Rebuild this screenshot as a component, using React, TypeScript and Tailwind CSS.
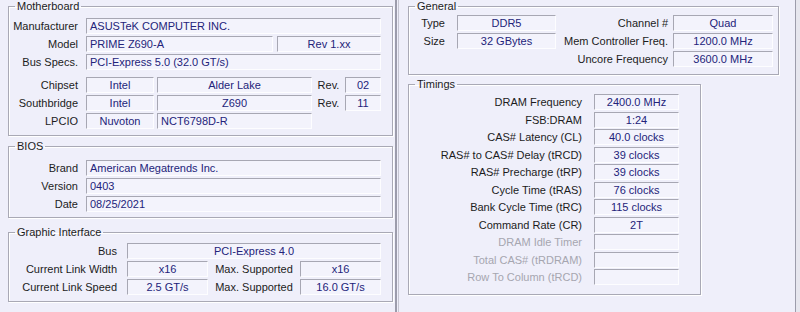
import React from 'react';

type FieldProps = { w?: string; left?: boolean; children?: React.ReactNode };

const Field: React.FC<FieldProps> = ({ w = 'flex-1', left, children }) => (
  <div
    className={`${w} h-[16px] shrink-0 border border-t-[#a7a7b3] border-l-[#a7a7b3] border-b-[#fdfdff] border-r-[#fdfdff] bg-[#f3f3fc] text-[#23237a] leading-[14px] whitespace-nowrap overflow-hidden ${left ? 'pl-[3px] text-left' : 'text-center'}`}
  >
    {children}
  </div>
);

const Label: React.FC<{ w: string; muted?: boolean; center?: boolean; children: React.ReactNode }> = ({ w, muted, center, children }) => (
  <div className={`${w} shrink-0 whitespace-nowrap leading-[16px] ${center ? 'text-center' : 'text-right'} ${muted ? 'text-[#a6a6b0]' : 'text-[#1c1c1c]'}`}>
    {children}
  </div>
);

const Group: React.FC<{ title: string; className: string; children: React.ReactNode }> = ({ title, className, children }) => (
  <fieldset className={`border border-[#a9a9b5] shadow-[inset_1px_1px_0_#ffffff,1px_1px_0_#ffffff] ${className}`}>
    <legend className="ml-[6px] px-[2px] leading-[12px] text-[#1c1c1c]">{title}</legend>
    {children}
  </fieldset>
);

const timings: [string, string, boolean?][] = [
  ['DRAM Frequency', '2400.0 MHz'],
  ['FSB:DRAM', '1:24'],
  ['CAS# Latency (CL)', '40.0 clocks'],
  ['RAS# to CAS# Delay (tRCD)', '39 clocks'],
  ['RAS# Precharge (tRP)', '39 clocks'],
  ['Cycle Time (tRAS)', '76 clocks'],
  ['Bank Cycle Time (tRC)', '115 clocks'],
  ['Command Rate (CR)', '2T'],
  ['DRAM Idle Timer', '', true],
  ['Total CAS# (tRDRAM)', '', true],
  ['Row To Column (tRCD)', '', true],
];

export default function App() {
  return (
    <div
      className="flex h-[312px] w-[800px] overflow-hidden bg-[#efeffa] text-[11px]"
      style={{ fontFamily: '"Liberation Sans", Arial, sans-serif' }}
    >
      {/* Mainboard tab */}
      <div className="flex w-[397px] shrink-0 flex-col border-r-2 border-[#9c9cab] pl-[8px]">
        <Group title="Motherboard" className="w-[385px] pt-[6px] pb-[6px] pr-[11px]">
          <div className="flex flex-col gap-[2px]">
            <div className="flex items-center gap-[8px]">
              <Label w="w-[69px]">Manufacturer</Label>
              <Field left>ASUSTeK COMPUTER INC.</Field>
            </div>
            <div className="flex items-center">
              <Label w="w-[69px]">Model</Label>
              <div className="ml-[8px] flex flex-1 gap-[4px]">
                <Field w="w-[187px]" left>PRIME Z690-A</Field>
                <Field>Rev 1.xx</Field>
              </div>
            </div>
            <div className="flex items-center gap-[8px]">
              <Label w="w-[69px]">Bus Specs.</Label>
              <Field left>PCI-Express 5.0 (32.0 GT/s)</Field>
            </div>
          </div>
          <div className="mt-[7px] flex flex-col gap-[2px]">
            {[
              ['Chipset', 'Intel', 'Alder Lake', '02'],
              ['Southbridge', 'Intel', 'Z690', '11'],
            ].map(([l, a, b, r]) => (
              <div key={l} className="flex items-center">
                <Label w="w-[69px]">{l}</Label>
                <div className="ml-[8px] flex flex-1 items-center">
                  <Field w="w-[68px]">{a}</Field>
                  <div className="ml-[3px]">
                    <Field w="w-[155px]">{b}</Field>
                  </div>
                  <Label w="w-[33px]" center>Rev.</Label>
                  <Field>{r}</Field>
                </div>
              </div>
            ))}
            <div className="flex items-center">
              <Label w="w-[69px]">LPCIO</Label>
              <div className="ml-[8px] flex flex-1 items-center">
                <Field w="w-[68px]">Nuvoton</Field>
                <div className="ml-[3px]">
                  <Field w="w-[155px]" left>NCT6798D-R</Field>
                </div>
              </div>
            </div>
          </div>
        </Group>

        <Group title="BIOS" className="mt-[4px] w-[385px] pt-[8px] pb-[5px] pr-[11px]">
          <div className="flex flex-col gap-[2px]">
            {[
              ['Brand', 'American Megatrends Inc.'],
              ['Version', '0403'],
              ['Date', '08/25/2021'],
            ].map(([l, v]) => (
              <div key={l} className="flex items-center gap-[8px]">
                <Label w="w-[69px]">{l}</Label>
                <Field left>{v}</Field>
              </div>
            ))}
          </div>
        </Group>

        <Group title="Graphic Interface" className="mt-[8px] w-[385px] pt-[5px] pb-[6px] pr-[11px]">
          <div className="flex flex-col gap-[2px]">
            <div className="flex items-center gap-[10px]">
              <Label w="w-[108px]">Bus</Label>
              <Field>PCI-Express 4.0</Field>
            </div>
            {[
              ['Current Link Width', 'x16', 'x16'],
              ['Current Link Speed', '2.5 GT/s', '16.0 GT/s'],
            ].map(([l, a, b]) => (
              <div key={l} className="flex items-center">
                <Label w="w-[108px]">{l}</Label>
                <div className="ml-[10px] flex flex-1 items-center">
                  <Field w="w-[81px]">{a}</Field>
                  <Label w="w-[92px]" center>Max. Supported</Label>
                  <Field>{b}</Field>
                </div>
              </div>
            ))}
          </div>
        </Group>
      </div>

      {/* Memory tab */}
      <div className="ml-[1px] flex w-[398px] shrink-0 flex-col border-x border-l-[#c6c6d2] border-r-[#9c9cab] pl-[9px]">
        <Group title="General" className="w-[371px] pt-[3px] pb-[7px] pr-[5px]">
          <div className="flex">
            <div className="flex flex-col gap-[2px]">
              {[
                ['Type', 'DDR5'],
                ['Size', '32 GBytes'],
              ].map(([l, v]) => (
                <div key={l} className="flex items-center gap-[12px]">
                  <Label w="w-[36px]">{l}</Label>
                  <Field w="w-[99px]">{v}</Field>
                </div>
              ))}
            </div>
            <div className="flex flex-1 flex-col gap-[2px]">
              {[
                ['Channel #', 'Quad'],
                ['Mem Controller Freq.', '1200.0 MHz'],
                ['Uncore Frequency', '3600.0 MHz'],
              ].map(([l, v]) => (
                <div key={l} className="flex items-center justify-end gap-[5px]">
                  <Label w="flex-1">{l}</Label>
                  <Field w="w-[100px]">{v}</Field>
                </div>
              ))}
            </div>
          </div>
        </Group>

        <Group title="Timings" className="mt-[3px] w-[293px] pt-[4px] pb-[9px] pr-[20px]">
          <div className="flex flex-col gap-[1.5px]">
            {timings.map(([l, v, muted]) => (
              <div key={l} className="flex items-center gap-[12px]">
                <Label w="w-[173px]" muted={muted}>{l}</Label>
                <Field w="w-[85px]">{v}</Field>
              </div>
            ))}
          </div>
        </Group>
      </div>
      <div className="flex-1 bg-[#e6e6ee]" />
    </div>
  );
}
